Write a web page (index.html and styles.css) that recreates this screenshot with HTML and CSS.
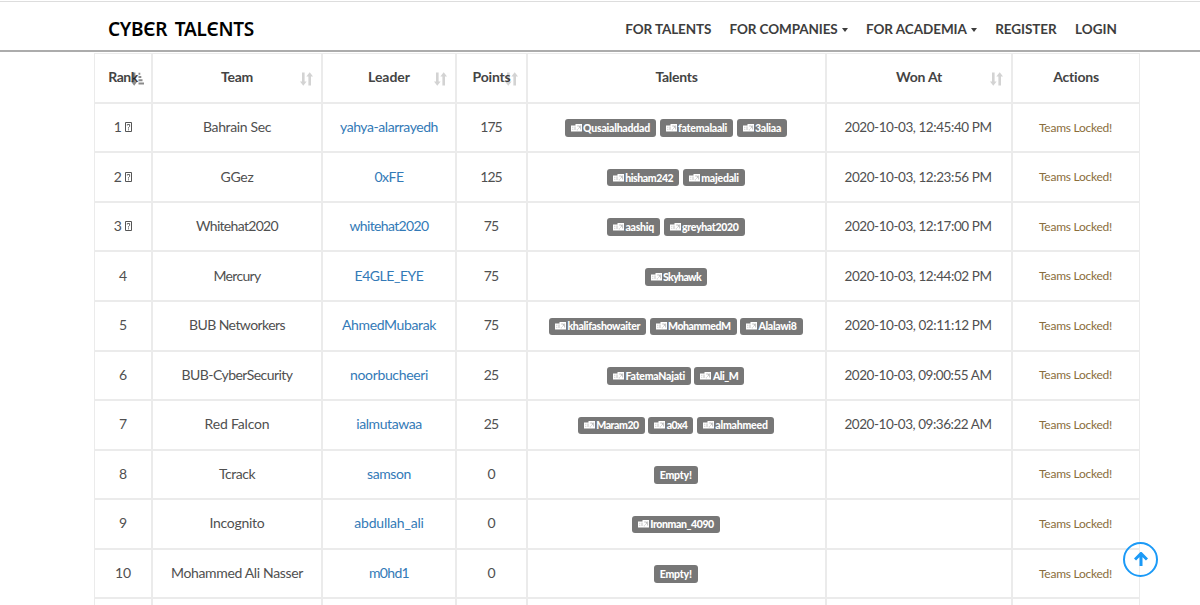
FILE: index.html
```html
<!DOCTYPE html>
<html lang="en">
<head>
<meta charset="utf-8">
<title>Cyber Talents</title>
<link rel="stylesheet" href="styles.css">
</head>
<body>
<svg class="defs" width="0" height="0">
  <symbol id="sort" viewBox="0 0 13 14"><path d="M2 .5h2.600v9H6.600L3.300 13.700 0 9.500h2zM8.400 13.500H11v-9h2L9.700.3 6.400 4.500h2z"/></symbol>
  <symbol id="sorted" viewBox="0 0 13 14"><path d="M2 .5h2.400v9h1.900L3.200 13.700 0 9.500h2zM7.500.8h1.800v2H7.500zM7.500 4h2.800v2H7.500zM7.500 7.300h4v2h-4zM7.500 10.600H13v2H7.500z"/></symbol>
  <symbol id="medal" viewBox="0 0 7 10"><path d="M.5.5h6v9h-6z" fill="none" stroke="currentColor"/><path d="M2.300 3.500V2.500h2.300v2L3.500 5.500v1M3.500 7.300v1" fill="none" stroke="currentColor" stroke-width=".9"/></symbol>
  <symbol id="user" viewBox="0 0 11 8"><path d="M0 1.500h4.500V0H11v7.500H0z" fill="#fff"/><path d="M1.300 3.300h1M1.300 5.300h1M4 2.500v3.500M6.200 2h2.300v1.500L7.300 4.500M5.800 5.800h1M9.600 1.500v4" fill="none" stroke="#999" stroke-width=".6"/></symbol>
</svg>
<header class="navbar">
  <a class="brand"><span data-w="146">CYBЄR TALЄNTS</span></a>
  <nav class="nav">
    <a><span data-w="86">FOR TALENTS</span></a>
    <a><span data-w="108">FOR COMPANIES</span><i class="caret"></i></a>
    <a><span data-w="101">FOR ACADEMIA</span><i class="caret"></i></a>
    <a><span data-w="61.500">REGISTER</span></a>
    <a><span data-w="42">LOGIN</span></a>
  </nav>
</header>
<main class="board" id="board">
  <div class="row head">
    <div class="cell"><span data-w="29.500">Rank</span><svg class="sort sorted"><use href="#sorted"/></svg></div>
    <div class="cell"><span data-w="32">Team</span><svg class="sort"><use href="#sort"/></svg></div>
    <div class="cell"><span data-w="42">Leader</span><svg class="sort"><use href="#sort"/></svg></div>
    <div class="cell"><span data-w="38">Points</span><svg class="sort"><use href="#sort"/></svg></div>
    <div class="cell"><span data-w="42">Talents</span></div>
    <div class="cell"><span data-w="46">Won At</span><svg class="sort"><use href="#sort"/></svg></div>
    <div class="cell"><span data-w="46">Actions</span></div>
  </div>
</main>
<a class="to-top" aria-label="Back to top"><svg viewBox="0 0 14 14"><path d="M7 14V2M1 7.500l6-6 6 6" fill="none" stroke="#1b9af7" stroke-width="3"/></svg></a>
<script src="app.js"></script>
</body>
</html>
```
FILE: styles.css
```css
* { box-sizing: border-box; }
body { margin: 0; height: 605px; overflow: hidden; background: #fff; color: #505050; font: 14px/20px Lato, "Open Sans", sans-serif; }
.defs { position: absolute; }
.navbar { height: 52px; margin: 0; padding: 0 83px 0 108px; border-bottom: 2px solid #acacac; box-shadow: inset 0 1px #fff, inset 0 2px #ddd; display: flex; justify-content: space-between; align-items: center; }
.brand { color: #000; font: 600 19px/24px "Noto Sans", sans-serif; padding-top: 8px; }
.brand span { display: block; white-space: nowrap; word-spacing: 3px; }
.nav { display: flex; gap: 18.300px; padding-top: 7px; color: #3d3d3d; font-weight: bold; font-size: 13.5px; }
.nav a { display: flex; align-items: center; }
.caret { margin-left: 4px; margin-top: 3px; border: 3.500px solid transparent; border-top: 4px solid #3d3d3d; border-bottom: 0; }
.board { width: 1046px; height: 551.700px; overflow: hidden; margin: 1.300px 0 0 94px; }
.row { display: grid; grid-template-columns: 58px 170px 134px 71px 299px 186px 128px; height: 49.550px; }
.row.last { height: 7px; overflow: hidden; }
.cell { position: relative; border: 1px solid #ebebeb; display: flex; align-items: center; justify-content: center; gap: 3.500px; white-space: nowrap; padding: 0 0 1px 0; }
.row.last .cell { border-bottom: 0; }
.head .cell { font-weight: bold; color: #444; padding-bottom: 2px; }
.cell span { display: block; }
.sort { position: absolute; right: 8px; top: 18px; width: 13px; height: 14px; fill: #000; opacity: .17; }
.sorted { right: 7px; opacity: .45; }
.leader { color: #337ab7; }
.points { padding-right: 1px; }
.talents { padding-right: 1.500px; }
.won { font-size: 13.5px; padding-right: 2px; }
.action { color: #8a6d3b; font-size: 12px; padding: 0 1px 0 0; }
.medal { width: 7px; height: 10px; color: #555; }
.badge { height: 17.500px; margin-top: 2px; padding: 0 6px; border-radius: 3px; background: #777; color: #fff; font-size: 10.500px; font-weight: 900; line-height: 16px; display: flex; align-items: center; gap: 1.500px; }
.badge svg { width: 11px; height: 8px; flex: none; }
.to-top { position: fixed; left: 1123px; top: 542px; width: 35px; height: 35px; border: 2px solid #1b9af7; border-radius: 50%; display: flex; align-items: center; justify-content: center; }
.to-top svg { width: 14px; height: 14px; margin-bottom: 1px; }
```
FILE: app.js
```js
// [team, width], [leader, width], points, [[talent, badge width]...], won at
const teams = [
  [["Bahrain Sec", 68], ["yahya-alarrayedh", 98], 175, [["Qusaialhaddad", 91.5], ["fatemalaali", 73.5], ["3aliaa", 50.5]], "2020-10-03, 12:45:40 PM"],
  [["GGez", 33], ["0xFE", 29], 125, [["hisham242", 72.5], ["majedali", 62]], "2020-10-03, 12:23:56 PM"],
  [["Whitehat2020", 82], ["whitehat2020", 79], 75, [["aashiq", 53], ["greyhat2020", 81]], "2020-10-03, 12:17:00 PM"],
  [["Mercury", 47], ["E4GLE_EYE", 69], 75, [["Skyhawk", 62.5]], "2020-10-03, 12:44:02 PM"],
  [["BUB Networkers", 96], ["AhmedMubarak", 94], 75, [["khalifashowaiter", 97], ["MohammedM", 87], ["Alalawi8", 62.5]], "2020-10-03, 02:11:12 PM"],
  [["BUB-CyberSecurity", 111], ["noorbucheeri", 78], 25, [["FatemaNajati", 84], ["Ali_M", 50]], "2020-10-03, 09:00:55 AM"],
  [["Red Falcon", 65], ["ialmutawaa", 65.5], 25, [["Maram20", 67], ["a0x4", 45], ["almahmeed", 77]], "2020-10-03, 09:36:22 AM"],
  [["Tcrack", 36], ["samson", 44], 0, [], ""],
  [["Incognito", 55], ["abdullah_ali", 69.5], 0, [["Ironman_4090", 88]], ""],
  [["Mohammed Ali Nasser", 132], ["m0hd1", 40], 0, [], ""],
];
const text = (t, w) => `<span data-w="${w}">${t}</span>`;
const cell = (html, cls = "") => `<div class="cell ${cls}">${html}</div>`;
const badge = ([t, w]) => `<div class="badge"><svg><use href="#user"/></svg>${text(t, w - 24.5)}</div>`;

document.getElementById("board").insertAdjacentHTML("beforeend", teams.map(([team, leader, points, talents, won], i) =>
  `<div class="row">` +
  cell(`<span>${i + 1}</span>` + (i < 3 ? `<svg class="medal"><use href="#medal"/></svg>` : "")) +
  cell(text(...team)) + cell(text(...leader), "leader") +
  cell(text(points, String(points).length * 7.2), "points") +
  cell(talents.map(badge).join("") || `<div class="badge">${text("Empty!", 32)}</div>`, "talents") +
  cell(won && text(won, 147), "won") + cell(text("Teams Locked!", 73), "action") +
  `</div>`).join("") + `<div class="row last">${cell("").repeat(7)}</div>`);

document.querySelectorAll("[data-w]").forEach(el => {
  const width = +el.dataset.w;
  const spacing = (width - el.getBoundingClientRect().width) / el.textContent.length;
  el.style.letterSpacing = spacing + "px";
});
```
